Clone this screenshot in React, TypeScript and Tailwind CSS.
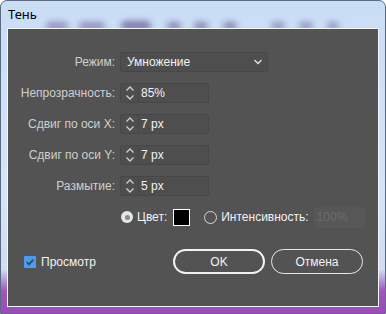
import React from "react";

const font = { fontFamily: '"Liberation Sans", Arial, sans-serif' };

function Spinner() {
  return (
    <svg width="10" height="16" viewBox="0 0 10 16" fill="none" stroke="#d0d0d0" strokeWidth="1.3">
      <path d="M1.5 5.5 L5 2 L8.5 5.5" />
      <path d="M1.5 10.5 L5 14 L8.5 10.5" />
    </svg>
  );
}

function NumRow({ label, value }: { label: string; value: string }) {
  return (
    <div className="flex items-center h-5">
      <div className="w-[108px] pr-[1px] text-right text-[#cfcfcf]">{label}</div>
      <div className="ml-[4px] flex h-5 w-[89px] border border-[#474747] bg-[#4e4e4e] rounded-[2px]">
        <div className="w-[18px] flex items-center justify-center border-r border-[#474747]">
          <Spinner />
        </div>
        <div className="pl-[2px] flex items-center text-[#f2f2f2]">{value}</div>
      </div>
    </div>
  );
}

export default function App() {
  return (
    <div className="w-[386px] h-[314px] overflow-hidden text-[12px]" style={font}>
      <div className="relative w-full h-full rounded-t-[7px] border border-[#5b6b80] bg-[linear-gradient(180deg,#c9ddf5_0%,#d5e5f8_60%,#d2dcf2_86%,#9c56bf_93%,#9b4cbb_100%)] flex flex-col">
        {/* blurred background blobs behind the glass */}
        <div className="absolute left-[45px] top-[21px] w-[22px] h-[8px] rounded-full bg-[#6b5a9a] blur-[3px] opacity-60" />
        <div className="absolute left-[78px] top-[21px] w-[26px] h-[8px] rounded-full bg-[#6b5a9a] blur-[3px] opacity-60" />
        <div className="absolute left-[120px] top-[20px] w-[30px] h-[9px] rounded-full bg-[#5d4c8e] blur-[3px] opacity-70" />
        <div className="absolute left-[166px] top-[21px] w-[14px] h-[8px] rounded-full bg-[#5d4c8e] blur-[3px] opacity-60" />
        <div className="absolute left-[193px] top-[21px] w-[14px] h-[8px] rounded-full bg-[#5d4c8e] blur-[3px] opacity-60" />
        <div className="absolute left-[222px] top-[21px] w-[14px] h-[8px] rounded-full bg-[#5d4c8e] blur-[3px] opacity-60" />
        <div className="absolute left-[270px] top-[21px] w-[14px] h-[8px] rounded-full bg-[#5d4c8e] blur-[3px] opacity-50" />
        <div className="absolute left-[298px] top-[21px] w-[14px] h-[8px] rounded-full bg-[#5d4c8e] blur-[3px] opacity-50" />
        <div className="absolute left-[326px] top-[21px] w-[12px] h-[8px] rounded-full bg-[#5d4c8e] blur-[3px] opacity-50" />

        <div className="relative h-[27px] pl-[7px] pt-[4px] text-[13px] text-black" style={{ fontFamily: '"Noto Sans", "Open Sans", sans-serif' }}>
          Тень
        </div>

        <div className="relative mx-[6px] h-[279px] border border-[#f4f8fd] bg-[#535353] flex flex-col">
          <div className="pt-[23px] flex flex-col gap-[11px]">
            <div className="flex items-center h-5">
              <div className="w-[108px] pr-[1px] text-right text-[#cfcfcf]">Режим:</div>
              <div className="ml-[4px] flex items-center justify-between h-5 w-[148px] pl-[6px] pr-[4px] border border-[#474747] bg-[#4e4e4e] rounded-[2px] text-[#f2f2f2]">
                <span>Умножение</span>
                <svg width="10" height="6" viewBox="0 0 10 6" fill="none" stroke="#e0e0e0" strokeWidth="1.4">
                  <path d="M1.5 1 L5 4.5 L8.5 1" />
                </svg>
              </div>
            </div>
            <NumRow label="Непрозрачность:" value="85%" />
            <NumRow label="Сдвиг по оси X:" value="7 px" />
            <NumRow label="Сдвиг по оси Y:" value="7 px" />
            <NumRow label="Размытие:" value="5 px" />
          </div>

          <div className="mt-[11px] flex items-center h-[20px] pl-[113px]">
            <span className="w-[12px] h-[12px] rounded-full bg-[#e6e6e6] flex items-center justify-center">
              <span className="w-[5px] h-[5px] rounded-full bg-[#8a8a8a]" />
            </span>
            <span className="ml-[4px] text-[#f2f2f2]">Цвет:</span>
            <span className="ml-[6px] w-[17px] h-[17px] border border-white bg-black" />
            <span className="ml-[14px] w-[13px] h-[13px] rounded-full border border-[#d8d8d8]" />
            <span className="ml-[4px] text-[#f2f2f2]">Интенсивность:</span>
            <span className="ml-[5px] w-[51px] h-[21px] bg-[#575757] rounded-[2px] pl-[3px] flex items-center text-[#6c6c6c]">100%</span>
          </div>

          <div className="mt-[22px] flex items-center pl-[16px]">
            <span className="w-[12px] h-[12px] bg-[#4a9cf0] rounded-[1px] flex items-center justify-center">
              <svg width="10" height="10" viewBox="0 0 10 10" fill="none" stroke="#3b4a5a" strokeWidth="1.8">
                <path d="M1.8 5.2 L4 7.4 L8.4 2.6" />
              </svg>
            </span>
            <span className="ml-[5px] text-[#f2f2f2]">Просмотр</span>
            <div className="ml-auto mr-[15px] flex gap-[6px]">
              <button className="w-[92px] h-[25px] rounded-full border-2 border-[#f2f2f2] text-[#f2f2f2]">OK</button>
              <button className="w-[92px] h-[25px] rounded-full border border-[#e8e8e8] text-[#f2f2f2]">Отмена</button>
            </div>
          </div>
        </div>
      </div>
    </div>
  );
}
